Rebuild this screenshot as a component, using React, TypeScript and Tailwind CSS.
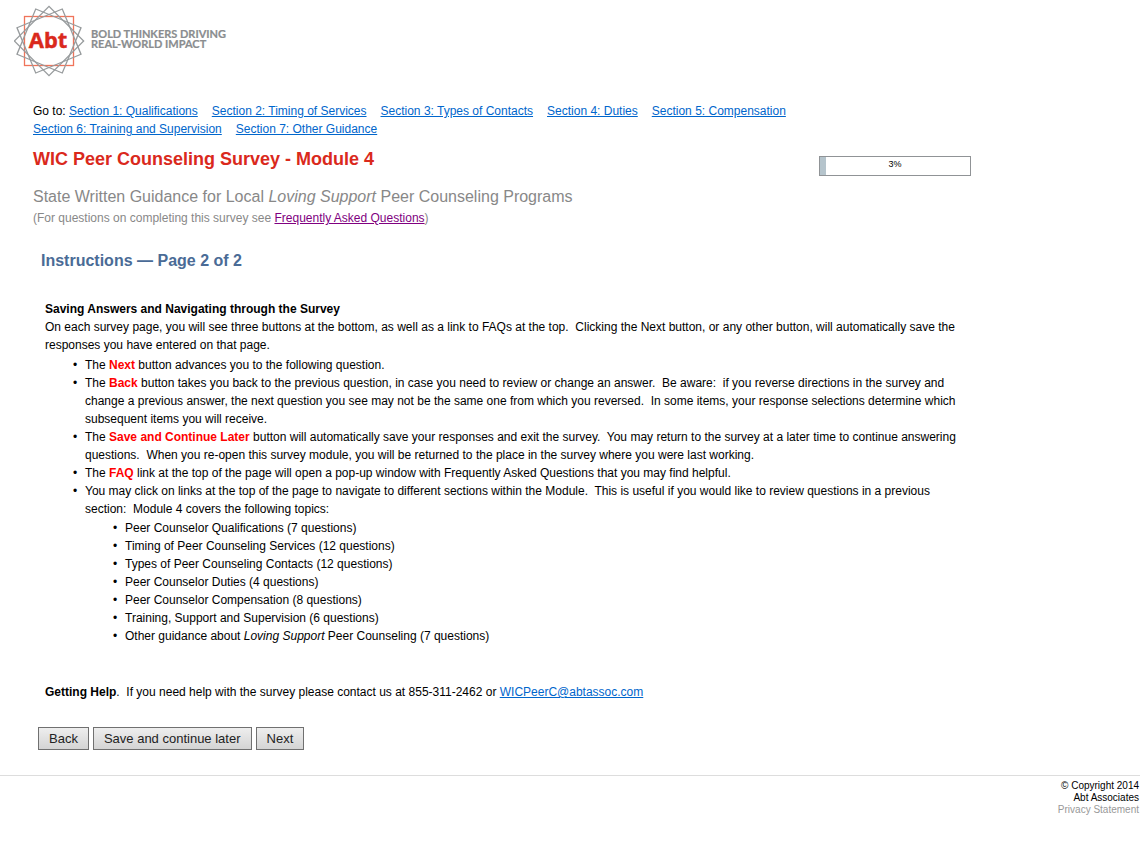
import type { ReactNode } from "react";

const sections = [
  "Section 1: Qualifications",
  "Section 2: Timing of Services",
  "Section 3: Types of Contacts",
  "Section 4: Duties",
  "Section 5: Compensation",
  "Section 6: Training and Supervision",
  "Section 7: Other Guidance",
];

const GAP = "\u00a0 ";

function Logo() {
  return (
    <svg width="224" height="72" viewBox="0 0 224 72" role="img" aria-label="Abt: Bold thinkers driving real-world impact">
      <rect x="10.5" y="11.5" width="49" height="49" fill="none" stroke="#f0745a" strokeWidth="1.3" />
      <g fill="none" stroke="#979b9d" strokeWidth="1.3">
        {[22.5, 45, 67.5].map((angle) => (
          <rect key={angle} x="10.5" y="11.5" width="49" height="49" transform={`rotate(${angle} 35 36)`} />
        ))}
      </g>
      <text x="34" y="43" textAnchor="middle" fill="#da291c" stroke="#da291c" strokeWidth="0.4" fontFamily="'Noto Sans', sans-serif" fontWeight="700" fontSize="22">
        Abt
      </text>
      <g fill="#8a8d8f" stroke="#8a8d8f" strokeWidth="0.2" fontFamily="Lato, sans-serif" fontWeight="700" fontSize="11">
        <text x="77" y="33">BOLD THINKERS DRIVING</text>
        <text x="77" y="43">REAL-WORLD IMPACT</text>
      </g>
    </svg>
  );
}

function Item({ children }: { children: ReactNode }) {
  return (
    <li className="flex">
      <span aria-hidden="true" className="w-3 shrink-0">
        •
      </span>
      <span>{children}</span>
    </li>
  );
}

function Term({ children }: { children: ReactNode }) {
  return <b className="text-[#ff0000]">{children}</b>;
}

function SurveyButton({ children }: { children: ReactNode }) {
  return (
    <button
      type="button"
      className="border border-[#707070] bg-linear-to-b from-[#eeeeee] to-[#d4d4d4] px-2.5 text-[13px] leading-[21px] text-[#222222]"
    >
      {children}
    </button>
  );
}

export default function App() {
  return (
    <div className="bg-white font-['Liberation_Sans',Arial,sans-serif] text-xs leading-[18px] text-black">
      <header className="px-3.5 pt-[5px]">
        <Logo />
      </header>

      <div className="max-w-[971px] pt-[25px] pl-[33px]">
        <nav aria-label="Survey sections" className="flex flex-wrap gap-x-3.5">
          {sections.map((name, i) => (
            <span key={name}>
              {i === 0 && "Go to: "}
              <a href="#" className="text-[#0066cc] underline">
                {name}
              </a>
            </span>
          ))}
        </nav>

        <div className="flex items-start justify-between pt-2.5">
          <h1 className="text-lg leading-[22px] font-bold text-[#da291c]">WIC Peer Counseling Survey - Module 4</h1>
          <div
            role="progressbar"
            aria-label="Survey progress"
            aria-valuenow={3}
            aria-valuemin={0}
            aria-valuemax={100}
            className="mt-2 grid h-5 w-[152px] border border-[#909396]"
          >
            <span className="col-start-1 row-start-1 bg-[#b5c4cc]" style={{ width: "4%" }} />
            <span className="col-start-1 row-start-1 text-center text-[9px] leading-[14px]">3%</span>
          </div>
        </div>

        <p className="pt-[11px] text-base leading-5 text-[#888888]">
          State Written Guidance for Local <i>Loving Support</i> Peer Counseling Programs
        </p>
        <p className="pt-0.5 text-[#888888]">
          (For questions on completing this survey see{" "}
          <a href="#" className="text-[#800080] underline">
            Frequently Asked Questions
          </a>
          )
        </p>

        <h2 className="pt-6 pl-2 text-base leading-5 font-bold text-[#4a6b96]">Instructions — Page 2 of 2</h2>

        <main className="pt-[29px] pl-3">
          <h3 className="font-bold">Saving Answers and Navigating through the Survey</h3>
          <p>
            On each survey page, you will see three buttons at the bottom, as well as a link to FAQs at the top.{GAP}
            Clicking the Next button, or any other button, will automatically save the responses you have entered on
            that page.
          </p>
          <ul className="pt-0.5 pl-7">
            <Item>
              The <Term>Next</Term> button advances you to the following question.
            </Item>
            <Item>
              The <Term>Back</Term> button takes you back to the previous question, in case you need to review or change
              an answer.{GAP}Be aware:{GAP}if you reverse directions in the survey and change a previous answer, the next
              question you see may not be the same one from which you reversed.{GAP}In some items, your response
              selections determine which subsequent items you will receive.
            </Item>
            <Item>
              The <Term>Save and Continue Later</Term> button will automatically save your responses and exit the
              survey.{GAP}You may return to the survey at a later time to continue answering questions.{GAP}When you
              re-open this survey module, you will be returned to the place in the survey where you were last working.
            </Item>
            <Item>
              The <Term>FAQ</Term> link at the top of the page will open a pop-up window with Frequently Asked Questions
              that you may find helpful.
            </Item>
            <Item>
              You may click on links at the top of the page to navigate to different sections within the Module.{GAP}
              This is useful if you would like to review questions in a previous section:{GAP}Module 4 covers the
              following topics:
            </Item>
          </ul>
          <ul className="pt-px pl-[68px]">
            <Item>Peer Counselor Qualifications (7 questions)</Item>
            <Item>Timing of Peer Counseling Services (12 questions)</Item>
            <Item>Types of Peer Counseling Contacts (12 questions)</Item>
            <Item>Peer Counselor Duties (4 questions)</Item>
            <Item>Peer Counselor Compensation (8 questions)</Item>
            <Item>Training, Support and Supervision (6 questions)</Item>
            <Item>
              Other guidance about <i>Loving Support</i> Peer Counseling (7 questions)
            </Item>
          </ul>
          <p className="pt-[38px]">
            <b>Getting Help</b>.{GAP}If you need help with the survey please contact us at 855-311-2462 or{" "}
            <a href="mailto:WICPeerC@abtassoc.com" className="text-[#0066cc] underline">
              WICPeerC@abtassoc.com
            </a>
          </p>
        </main>

        <div className="flex gap-1 pt-[26px] pl-[5px]">
          <SurveyButton>Back</SurveyButton>
          <SurveyButton>Save and continue later</SurveyButton>
          <SurveyButton>Next</SurveyButton>
        </div>
      </div>

      <footer className="mt-[25px] border-t border-[#dddddd] pt-1 pr-px text-right text-[10px] leading-3">
        <p>© Copyright 2014</p>
        <p>Abt Associates</p>
        <a href="#" className="block text-[#999999]">
          Privacy Statement
        </a>
      </footer>
    </div>
  );
}
